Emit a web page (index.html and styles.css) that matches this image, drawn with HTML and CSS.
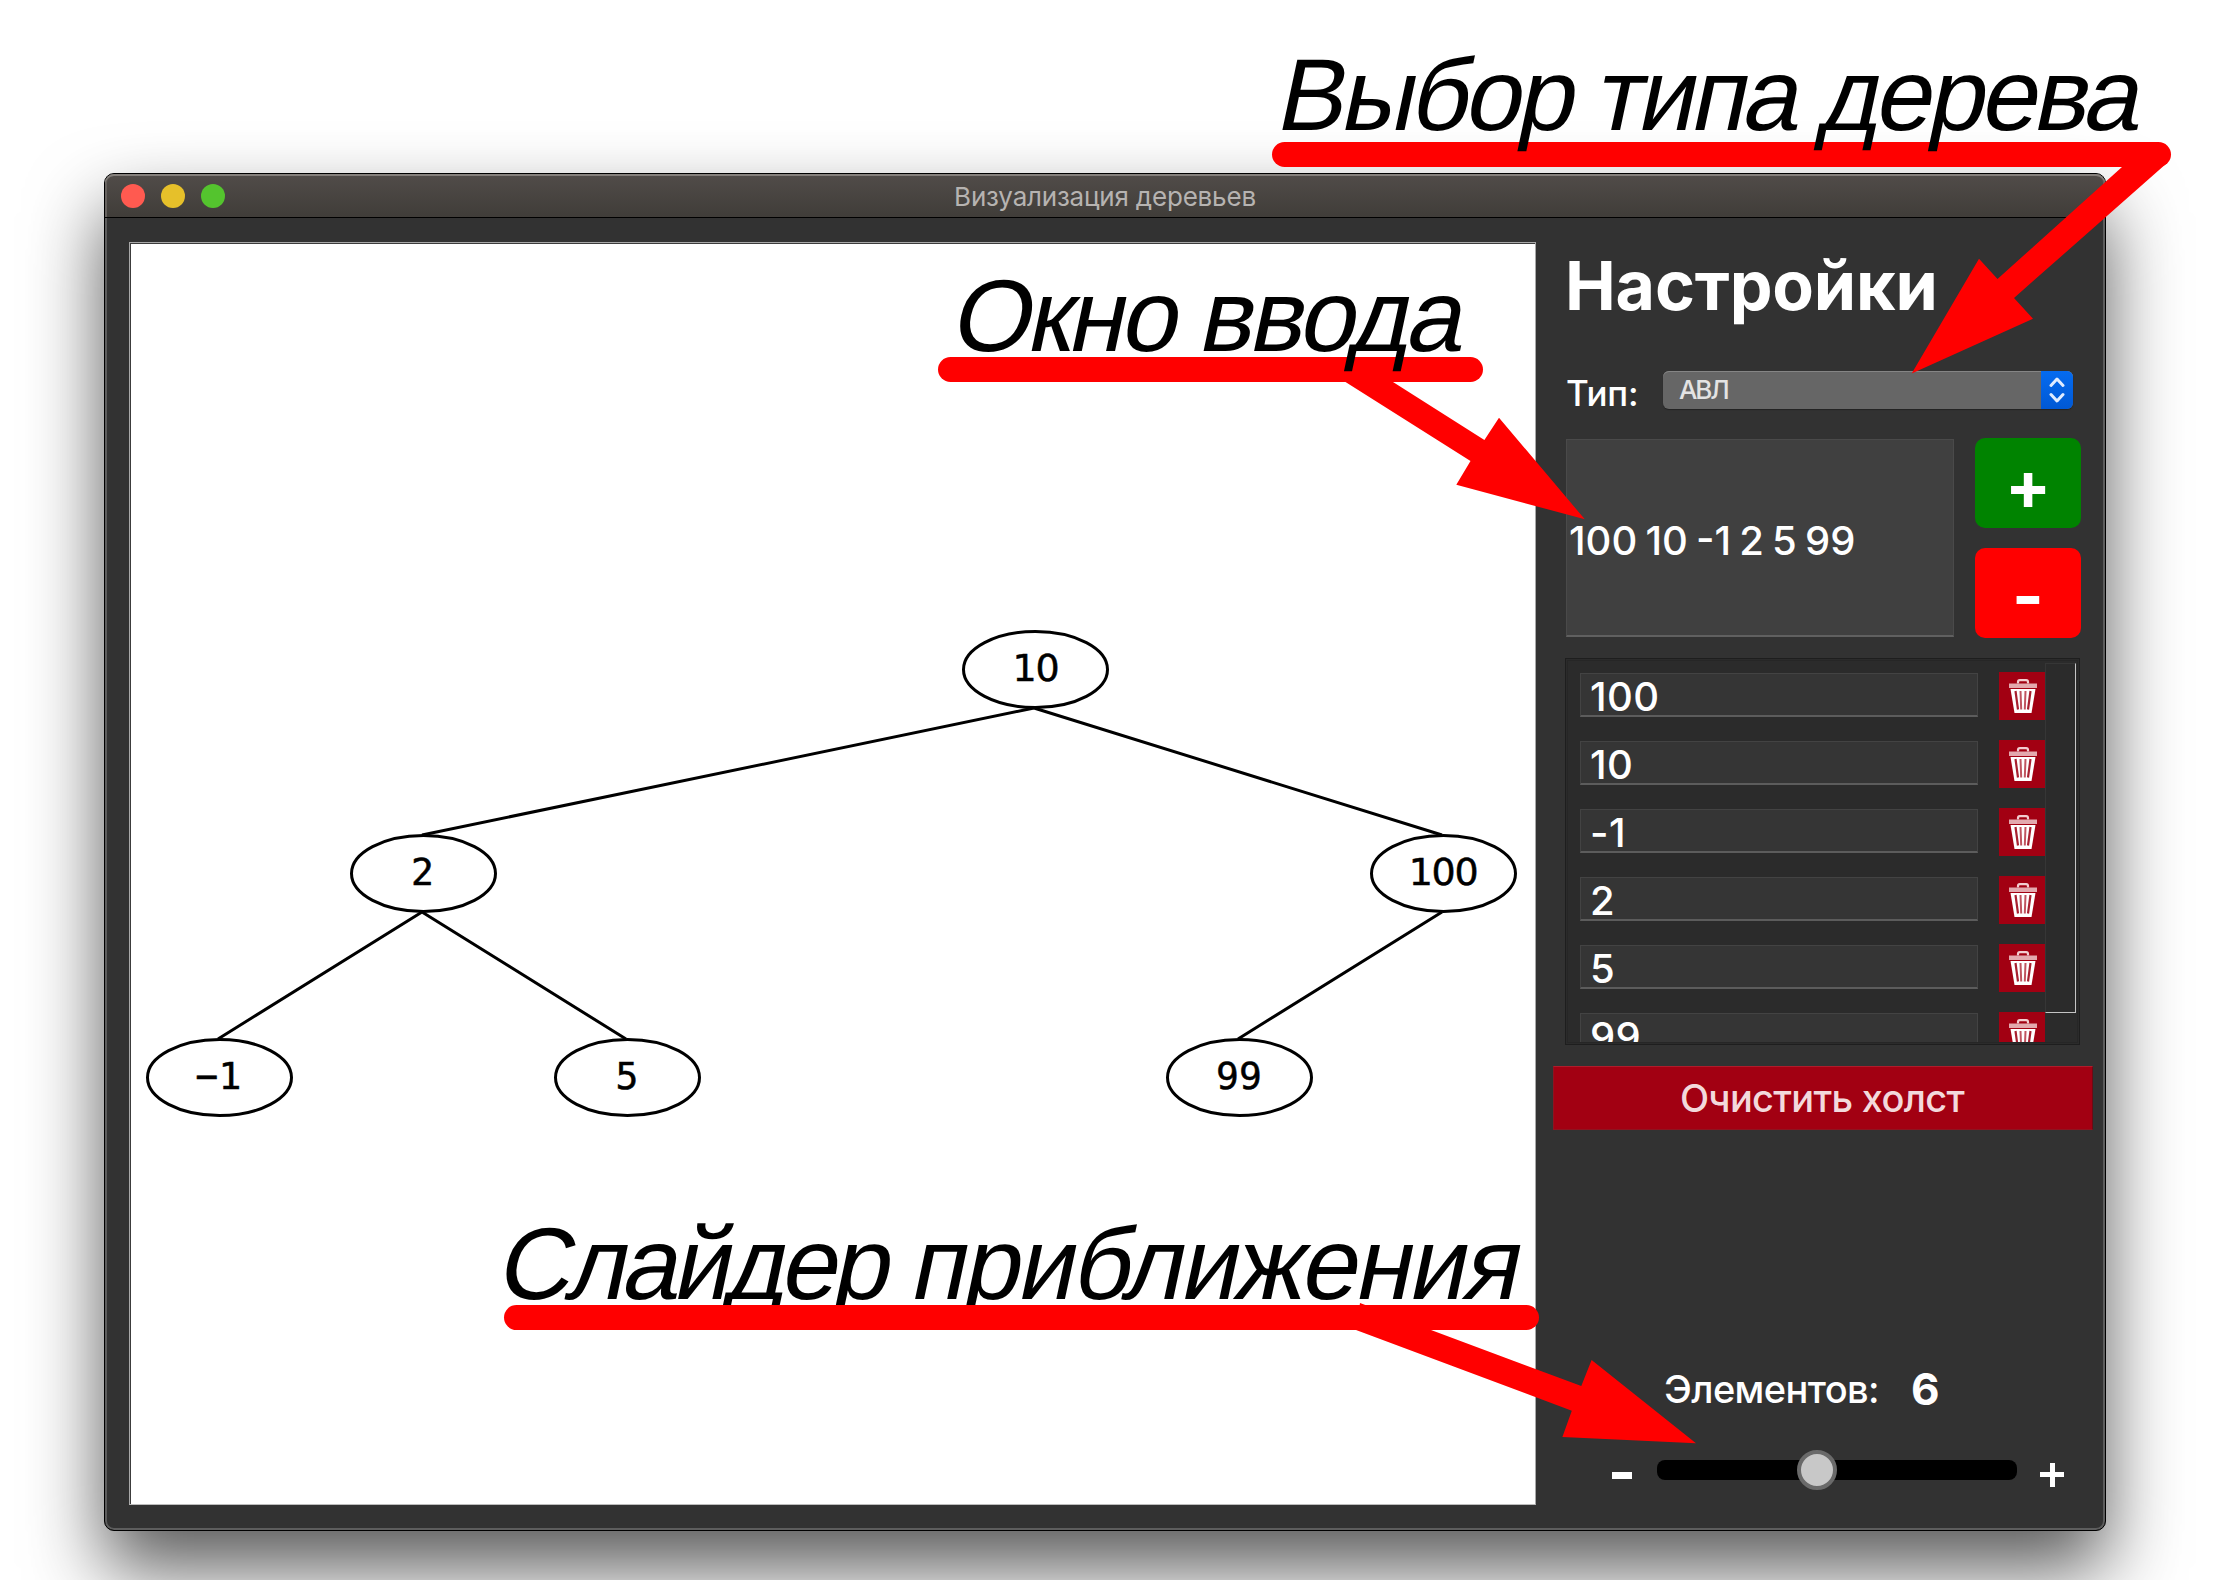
FILE: index.html
```html
<!DOCTYPE html>
<html lang="ru">
<head>
<meta charset="utf-8">
<title>Визуализация деревьев</title>
<link rel="stylesheet" href="styles.css">
</head>
<body>
<svg class="defs" width="0" height="0" aria-hidden="true">
  <symbol id="trash" viewBox="0 0 28 34">
    <path d="M9 4.500V3Q9 1.200 10.800 1.200H17.200Q19 1.200 19 3V4.500" fill="none" stroke="#f2cdd0" stroke-width="2.200"/>
    <path d="M0 4.500H28V9H0Z" fill="#e3a9ae"/>
    <path d="M1.500 10H26.500L22.500 34H5.500Z" fill="#fff"/>
    <path d="M6.500 12L9 30.500M21.500 12L19 30.500" stroke="#a82030" stroke-width="2.200"/>
    <path d="M11.500 12L12.200 30.500M16.500 12L15.800 30.500" stroke="#c05560" stroke-width="2"/>
  </symbol>
</svg>
<main class="window">
  <header class="titlebar">
    <div class="lights"><i class="light close"></i><i class="light minimize"></i><i class="light expand"></i></div>
    <h1 class="title">Визуализация деревьев</h1>
  </header>
  <div class="content">
    <section class="canvas">
      <svg class="tree" viewBox="131 244 1404 1260" width="1404" height="1260">
        <g class="edges">
          <path d="M1034 708L422 835M1034 708L1442 835M422 912L218 1039M422 912L626 1039M1442 912L1238 1039"/>
        </g>
        <g class="nodes">
          <ellipse cx="1035.500" cy="669.500" rx="72" ry="38"/>
          <ellipse cx="423.500" cy="873.500" rx="72" ry="38"/>
          <ellipse cx="1443.500" cy="873.500" rx="72" ry="38"/>
          <ellipse cx="219.500" cy="1077.500" rx="72" ry="38"/>
          <ellipse cx="627.500" cy="1077.500" rx="72" ry="38"/>
          <ellipse cx="1239.500" cy="1077.500" rx="72" ry="38"/>
        </g>
        <g class="values">
          <text x="1035.500" y="680.500">10</text>
          <text x="1443" y="884.500">100</text>
          <text class="mono" x="422.500" y="884.500">2</text>
          <text class="mono" x="218.500" y="1088.500">−1</text>
          <text class="mono" x="627" y="1088.500">5</text>
          <text class="mono" x="1239" y="1088.500">99</text>
        </g>
      </svg>
    </section>
    <aside class="sidebar">
      <h2 class="heading">Настройки</h2>
      <div class="type-row">
        <span class="type-label">Тип:</span>
        <div class="select">
          <span class="select-value">АВЛ</span>
          <span class="select-arrows"><svg width="16" height="26" viewBox="0 0 16 26"><path d="M2 8.500L8 2L14 8.500M2 17.500L8 24L14 17.500"/></svg></span>
        </div>
      </div>
      <div class="entry-row">
        <div class="entry">100 10 -1 2 5 99</div>
        <div class="entry-buttons">
          <button class="btn add">+</button>
          <button class="btn remove">-</button>
        </div>
      </div>
      <div class="list">
        <div class="items">
          <div class="item"><div class="field">100</div><button class="delete"><svg><use href="#trash"/></svg></button></div>
          <div class="item"><div class="field">10</div><button class="delete"><svg><use href="#trash"/></svg></button></div>
          <div class="item"><div class="field">-1</div><button class="delete"><svg><use href="#trash"/></svg></button></div>
          <div class="item"><div class="field">2</div><button class="delete"><svg><use href="#trash"/></svg></button></div>
          <div class="item"><div class="field">5</div><button class="delete"><svg><use href="#trash"/></svg></button></div>
          <div class="item"><div class="field">99</div><button class="delete"><svg><use href="#trash"/></svg></button></div>
        </div>
        <div class="scrollbar"></div>
      </div>
      <button class="clear">Очистить холст</button>
      <div class="count"><span class="count-label">Элементов:</span><b class="count-value">6</b></div>
      <div class="zoom">
        <span class="zoom-out"></span>
        <div class="track"><i class="thumb"></i></div>
        <span class="zoom-in"></span>
      </div>
    </aside>
  </div>
</main>
<svg class="notes" viewBox="0 0 2224 1580" width="2224" height="1580">
  <path class="bar" d="M1284.500 154.500H2158.500"/>
  <path class="arrow" d="M2122 167L1997.500 279L1979 258.700L1911.700 373.500L2033 318.700L2014 298L2167 163L2150 145Z"/>
  <text transform="translate(1274 130) skewX(-12)" textLength="863">Выбор типа дерева</text>
  <path class="bar" d="M950.500 369.500H1470.500"/>
  <path class="arrow" d="M1345.500 382L1470.500 461L1456.300 484.700L1584.800 519.300L1499 417.700L1484.400 440L1393 382L1370 370Z"/>
  <text transform="translate(949 351) skewX(-12)" textLength="511">Окно ввода</text>
  <text transform="translate(495 1299) skewX(-12)" textLength="392">Слайдер</text>
  <text transform="translate(908 1299) skewX(-12)" textLength="608">приближения</text>
  <path class="bar" d="M516.500 1317.500H1526.500"/>
  <path class="arrow" d="M1356 1330L1571.800 1410.700L1562.400 1437L1696 1443.300L1591.600 1360L1581.300 1386L1431 1330L1360 1303Z"/>
</svg>
</body>
</html>
```
FILE: styles.css
```css
* { box-sizing: border-box; }
body {
  margin: 0;
  width: 2224px;
  height: 1580px;
  overflow: hidden;
  padding: 173px 0 0 104px;
  background: #fff;
  font-family: Inter, "Liberation Sans", sans-serif;
  color: #fff;
}
h1, h2 { margin: 0; }
button { border: 0; padding: 0; font: inherit; color: inherit; }
.defs { position: absolute; }

.window {
  display: flex;
  flex-direction: column;
  width: 2002px;
  height: 1358px;
  border: 1px solid #000;
  border-radius: 10px;
  background: #323232;
  box-shadow: inset 0 0 0 2px #5d5d5d, 0 38px 76px rgba(0, 0, 0, .65);
}
.titlebar {
  display: grid;
  grid-template-columns: 200px 1fr 200px;
  align-items: center;
  height: 44px;
  border-bottom: 1px solid #000;
  border-radius: 9px 9px 0 0;
  background: linear-gradient(#514c49, #403d39);
  box-shadow: inset 0 2px #85807c, inset 2px 0 #66625f, inset -2px 0 #66625f;
}
.lights { display: flex; gap: 16px; padding-left: 16px; }
.light { width: 24px; height: 24px; border-radius: 50%; }
.close { background: #ff5a50; }
.minimize { background: #e6c02a; }
.expand { background: #54c42e; }
.title {
  padding-top: 2px;
  text-align: center;
  font-size: 26px;
  font-weight: 400;
  line-height: 32px;
  letter-spacing: -.2px;
  color: #b6b3b1;
}
.content { display: flex; flex: 1; padding: 24px 0 0 24px; }
.canvas {
  width: 1407px;
  height: 1263px;
  flex: none;
  border: 1px solid #a8a8a8;
  border-bottom-color: #bcbcbc;
  background: #fff;
  box-shadow: inset 1px 1px #3c3c3c;
  padding: 1px 0 0 1px;
}
.tree { display: block; }
.edges, .nodes { stroke: #000; stroke-width: 3; fill: none; }
.values { font: 38px "DejaVu Sans", sans-serif; letter-spacing: -1.300px; text-anchor: middle; fill: #000; stroke: #000; stroke-width: .5; }
.mono { font-family: "DejaVu Sans Mono", monospace; letter-spacing: 0; }

.sidebar { display: flex; flex-direction: column; width: 568px; padding: 4px 25px 0 30px; }
.heading { margin: -1px 0 1px -1px; font-size: 68px; line-height: 80px; font-weight: 700; letter-spacing: -.2px; white-space: nowrap; }
.type-row { display: flex; margin-top: 45px; height: 38px; }
.type-label { width: 97px; padding-top: 3px; font-size: 35px; line-height: 38px; font-weight: 450; letter-spacing: -.3px; }
.select {
  display: flex;
  justify-content: space-between;
  width: 410px;
  border-radius: 6px;
  overflow: hidden;
  background: #666;
  box-shadow: inset 0 1px #858585, 0 1px 1px #222;
}
.select-value { padding-left: 16px; font-size: 26px; line-height: 38px; color: #e3e3e3; letter-spacing: -2.1px; font-weight: 450; }
.select-arrows {
  display: flex;
  align-items: center;
  justify-content: center;
  width: 32px;
  background: linear-gradient(#056bf0, #0058d4);
}
.select-arrows path { fill: none; stroke: #e0ecff; stroke-width: 3; stroke-linecap: round; stroke-linejoin: round; }
.entry-row { display: flex; justify-content: space-between; margin-top: 29px; width: 515px; height: 200px; }
.entry {
  width: 388px;
  height: 198px;
  margin-top: 1px;
  padding: 4px 0 0 2px;
  border: 1px solid #4a4a4a;
  border-bottom: 2px solid #606060;
  background: #404040;
  font-size: 40px;
  font-weight: 450;
  line-height: 194px;
  word-spacing: -2.500px;
  white-space: nowrap;
}
.entry-buttons { display: flex; flex-direction: column; gap: 20px; }
.btn { width: 106px; height: 90px; border-radius: 10px; padding-top: 3px; font-size: 68px; line-height: 80px; font-weight: 700; }
.add { background: #008300; }
.remove { background: #f00; }
.list {
  display: flex;
  width: 515px;
  height: 387px;
  margin-top: 20px;
  margin-left: -1px;
  padding: 3px 2px 1px 13px;
  border: 1px solid #1e1e1e;
  outline: 1px solid #262626;
  outline-offset: -3px;
  background: #2b2b2b;
}
.items { width: 465px; height: 381px; overflow: hidden; padding-top: 10px; margin-left: 1px; }
.item { display: flex; justify-content: space-between; height: 48px; margin-bottom: 20px; }
.field {
  width: 398px;
  height: 44px;
  margin-top: 1px;
  padding: 2px 0 0 9px;
  border: 1px solid #434343;
  border-bottom: 2px solid #5c5c5c;
  background: #353535;
  font-size: 40px;
  font-weight: 450;
  line-height: 42px;
  letter-spacing: .4px;
}
.delete { width: 46px; height: 48px; background: #a20012; }
.delete svg { display: block; width: 28px; height: 34px; margin-left: 10px; }
.scrollbar { width: 31px; height: 350px; margin-top: 1px; border: 1px solid #363636; border-right-color: #c4c4c4; border-bottom-color: #c4c4c4; }
.clear {
  width: 540px;
  height: 64px;
  flex: none;
  margin: 21px 0 0 -13px;
  border: 1px solid #8e1420;
  border-top-color: #b01c2b;
  border-right-color: #6d0a14;
  background: #a20012;
  color: #f3d9dc;
  font-size: 38px;
  font-weight: 450;
  line-height: 62px;
  letter-spacing: -.7px;
  text-indent: -2px;
}
.count { display: flex; align-items: center; height: 50px; margin: 234px 0 0 98px; }
.count-label { width: 247px; font-size: 38px; line-height: 50px; font-weight: 450; letter-spacing: -.6px; white-space: nowrap; }
.count-value { font-size: 44px; line-height: 50px; }
.zoom { display: flex; align-items: center; height: 40px; margin: 36px 0 0 46px; }
.zoom-out { width: 20px; height: 7px; background: #fff; margin: 11px 25px 0 0; }
.track { display: flex; align-items: center; width: 360px; height: 20px; border-radius: 8px; background: #000; padding-left: 140px; }
.thumb { width: 40px; height: 40px; flex: none; border: 4px solid #6a6a6a; border-radius: 50%; background: #c8c8c8; }
.zoom-in {
  width: 24px;
  height: 24px;
  margin: 9px 0 0 23px;
  background: linear-gradient(#fff, #fff) center / 24px 5px no-repeat, linear-gradient(#fff, #fff) center / 5px 24px no-repeat;
}

.notes { position: absolute; left: 0; top: 0; }
.notes text { font: 102px "Liberation Sans", Arial, sans-serif; fill: #000; }
.bar { stroke: #f00; stroke-width: 25; stroke-linecap: round; }
.arrow { fill: #f00; }
```
